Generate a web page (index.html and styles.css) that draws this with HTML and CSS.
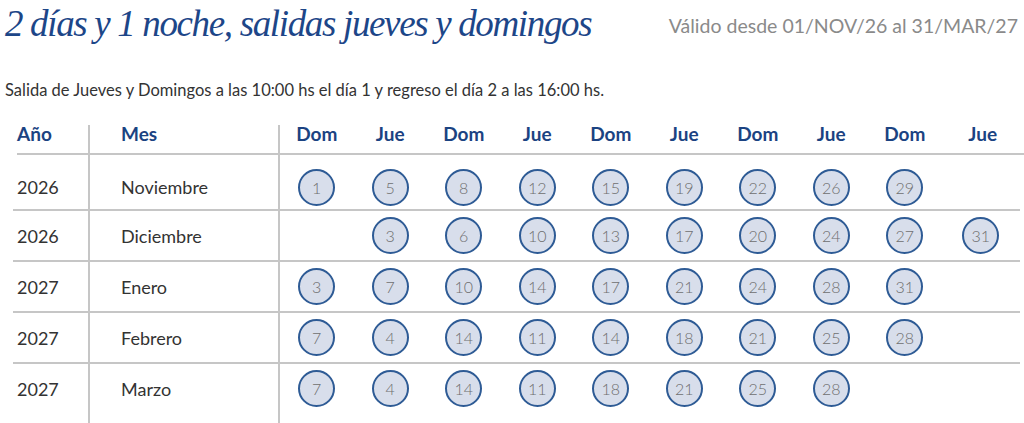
FILE: index.html
```html
<!DOCTYPE html>
<html lang="es">
<head>
<meta charset="utf-8">
<title>Salidas</title>
<link rel="stylesheet" href="styles.css">
</head>
<body>
<header class="top">
  <h1 class="title">2 días y 1 noche, salidas jueves y domingos</h1>
  <p class="valid">Válido desde 01/NOV/26 al 31/MAR/27</p>
</header>
<p class="intro">Salida de Jueves y Domingos a las 10:00 hs el día 1 y regreso el día 2 a las 16:00 hs.</p>
<div class="table">
  <div class="row head">
    <div class="c-year">Año</div><div class="c-month">Mes</div>
    <div class="c-day">Dom</div><div class="c-day">Jue</div><div class="c-day">Dom</div><div class="c-day">Jue</div><div class="c-day">Dom</div><div class="c-day">Jue</div><div class="c-day">Dom</div><div class="c-day">Jue</div><div class="c-day">Dom</div><div class="c-day">Jue</div>
  </div>
  <div class="row first">
    <div class="c-year">2026</div><div class="c-month">Noviembre</div>
    <div class="c-day"><span class="dot">1</span></div><div class="c-day"><span class="dot">5</span></div><div class="c-day"><span class="dot">8</span></div><div class="c-day"><span class="dot">12</span></div><div class="c-day"><span class="dot">15</span></div><div class="c-day"><span class="dot">19</span></div><div class="c-day"><span class="dot">22</span></div><div class="c-day"><span class="dot">26</span></div><div class="c-day"><span class="dot">29</span></div><div class="c-day"></div>
  </div>
  <div class="row">
    <div class="c-year">2026</div><div class="c-month">Diciembre</div>
    <div class="c-day"></div><div class="c-day"><span class="dot">3</span></div><div class="c-day"><span class="dot">6</span></div><div class="c-day"><span class="dot">10</span></div><div class="c-day"><span class="dot">13</span></div><div class="c-day"><span class="dot">17</span></div><div class="c-day"><span class="dot">20</span></div><div class="c-day"><span class="dot">24</span></div><div class="c-day"><span class="dot">27</span></div><div class="c-day"><span class="dot">31</span></div>
  </div>
  <div class="row">
    <div class="c-year">2027</div><div class="c-month">Enero</div>
    <div class="c-day"><span class="dot">3</span></div><div class="c-day"><span class="dot">7</span></div><div class="c-day"><span class="dot">10</span></div><div class="c-day"><span class="dot">14</span></div><div class="c-day"><span class="dot">17</span></div><div class="c-day"><span class="dot">21</span></div><div class="c-day"><span class="dot">24</span></div><div class="c-day"><span class="dot">28</span></div><div class="c-day"><span class="dot">31</span></div><div class="c-day"></div>
  </div>
  <div class="row">
    <div class="c-year">2027</div><div class="c-month">Febrero</div>
    <div class="c-day"><span class="dot">7</span></div><div class="c-day"><span class="dot">4</span></div><div class="c-day"><span class="dot">14</span></div><div class="c-day"><span class="dot">11</span></div><div class="c-day"><span class="dot">14</span></div><div class="c-day"><span class="dot">18</span></div><div class="c-day"><span class="dot">21</span></div><div class="c-day"><span class="dot">25</span></div><div class="c-day"><span class="dot">28</span></div><div class="c-day"></div>
  </div>
  <div class="row last">
    <div class="c-year">2027</div><div class="c-month">Marzo</div>
    <div class="c-day"><span class="dot">7</span></div><div class="c-day"><span class="dot">4</span></div><div class="c-day"><span class="dot">14</span></div><div class="c-day"><span class="dot">11</span></div><div class="c-day"><span class="dot">18</span></div><div class="c-day"><span class="dot">21</span></div><div class="c-day"><span class="dot">25</span></div><div class="c-day"><span class="dot">28</span></div><div class="c-day"></div><div class="c-day"></div>
  </div>
</div>
</body>
</html>
```
FILE: styles.css
```css
html, body {
  margin: 0;
  padding: 0;
  background: #ffffff;
  overflow: hidden;
}
body {
  font-family: Lato, "Open Sans", sans-serif;
  color: #333333;
  width: 1024px;
  height: 423px;
}
.top {
  display: flex;
  justify-content: space-between;
  align-items: flex-start;
  padding: 0 6px 0 5px;
  height: 50px;
}
.title {
  margin: 0;
  padding-top: 2px;
  font-family: "Liberation Serif", "Times New Roman", serif;
  font-style: italic;
  font-weight: normal;
  font-size: 37px;
  line-height: 44px;
  letter-spacing: -1.35px;
  color: #1d4688;
}
.valid {
  margin: 0;
  padding-top: 13px;
  font-size: 19.5px;
  line-height: 26px;
  font-weight: 400;
  color: #8a8a8a;
}
.intro {
  margin: 29px 0 0 5px;
  font-size: 16.5px;
  line-height: 22px;
  color: #333333;
}
.table {
  margin: 24px 4px 0 13px;
}
.row {
  display: grid;
  grid-template-columns: 77px 190px repeat(9, 73.5px) 1fr;
  height: 49px;
  border-bottom: 2px solid #c6c6c6;
}
.row.head {
  grid-template-columns: 73px 190px repeat(9, 73.5px) 1fr;
  margin-left: 4px;
  margin-right: -4px;
  height: 28px;
}
.row.first {
  height: 54px;
}
.row.first > div {
  padding-top: 10px;
}
.row.last {
  border-bottom: none;
  height: 60px;
}
.row.last > div {
  padding-bottom: 11px;
}
.row > div {
  display: flex;
  align-items: center;
  box-sizing: border-box;
}
.row.head > div {
  align-items: flex-start;
  padding-top: 0;
}
.c-year {
  border-right: 2px solid #c6c6c6;
  padding-left: 4px;
  font-size: 18px;
}
.row.head .c-year {
  padding-left: 0;
}
.c-month {
  border-right: 2px solid #c6c6c6;
  padding-left: 31px;
  font-size: 18px;
}
.c-day {
  justify-content: center;
}
.head > div {
  font-weight: 700;
  font-size: 19px;
  line-height: 18px;
  padding-top: 1px;
  color: #1b4382;
}
.dot {
  display: flex;
  align-items: center;
  justify-content: center;
  width: 37px;
  height: 37px;
  box-sizing: border-box;
  border-radius: 50%;
  border: 2px solid #2e5b95;
  background: #d8deeb;
  color: #6f6f6f;
  font-size: 16px;
  font-weight: 300;
}
```
